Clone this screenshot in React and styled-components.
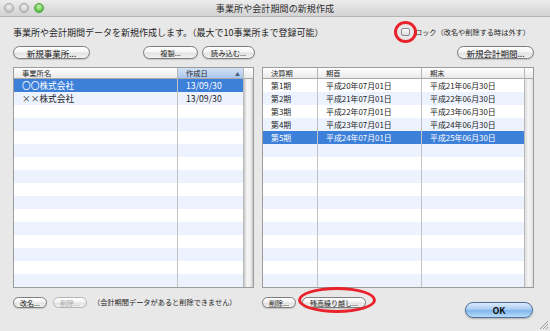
import React from "react";
import styled, { createGlobalStyle, css } from "styled-components";

const GlobalStyle = createGlobalStyle`
  body {
    margin: 0;
    background: #e8e8e8;
    font-family: "Noto Sans CJK JP", "Noto Sans", sans-serif;
  }
`;

const offices = [
  { name: "〇〇株式会社", date: "13/09/30" },
  { name: "××株式会社", date: "13/09/30" },
];

const periods = [
  ["第1期", "平成20年07月01日", "平成21年06月30日"],
  ["第2期", "平成21年07月01日", "平成22年06月30日"],
  ["第3期", "平成22年07月01日", "平成23年06月30日"],
  ["第4期", "平成23年07月01日", "平成24年06月30日"],
  ["第5期", "平成24年07月01日", "平成25年06月30日"],
];

const ROWS = 16;

const App = () => {
  return (
    <Window>
      <GlobalStyle />
      <TitleBar>
        <Lights>
          <Light />
          <Light />
          <Light $green />
        </Lights>
        <Title>事業所や会計期間の新規作成</Title>
      </TitleBar>
      <Body>
        <DescRow>
          <Desc>事業所や会計期間データを新規作成します。（最大で10事業所まで登録可能）</Desc>
          <Lock>
            <CheckWrap>
              <Check />
              <RedCircle />
            </CheckWrap>
            <SmallText>ロック（改名や削除する時は外す）</SmallText>
          </Lock>
        </DescRow>

        <Split $top={8}>
          <Side>
            <Pill $w={77}>新規事業所...</Pill>
            <Group>
              <Pill $small $w={55}>複製...</Pill>
              <Pill $small $w={53}>読み込む...</Pill>
            </Group>
          </Side>
          <Side $end>
            <Pill $w={77}>新規会計期間...</Pill>
          </Side>
        </Split>

        <Split $top={8}>
          <Table>
            <Grid>
              <Row $cols="164px 65px" $header>
                <HeadCell>事業所名</HeadCell>
                <HeadCell $sorted>
                  作成日<SortArrow>▲</SortArrow>
                </HeadCell>
              </Row>
              {Array.from({ length: ROWS }).map((_, i) => {
                const o = offices[i];
                return (
                  <Row key={i} $cols="164px 65px" $odd={i % 2 === 1} $selected={i === 0} $big>
                    <Cell>{o ? o.name : ""}</Cell>
                    <Cell>{o ? o.date : ""}</Cell>
                  </Row>
                );
              })}
            </Grid>
            <Scroll>
              <Corner />
              <Track />
            </Scroll>
          </Table>

          <Table>
            <Grid>
              <Row $cols="55px 104px 102px" $header>
                <HeadCell>決算期</HeadCell>
                <HeadCell>期首</HeadCell>
                <HeadCell>期末</HeadCell>
              </Row>
              {Array.from({ length: ROWS }).map((_, i) => {
                const p = periods[i];
                return (
                  <Row key={i} $cols="55px 104px 102px" $odd={i % 2 === 1} $selected={i === 4}>
                    <Cell>{p ? p[0] : ""}</Cell>
                    <Cell>{p ? p[1] : ""}</Cell>
                    <Cell>{p ? p[2] : ""}</Cell>
                  </Row>
                );
              })}
            </Grid>
            <Scroll $narrow>
              <Corner />
              <Track $light />
            </Scroll>
          </Table>
        </Split>

        <Split $top={9}>
          <Side $gap={6}>
            <Pill $mini $w={34}>改名...</Pill>
            <Pill $mini $disabled $w={34}>削除...</Pill>
            <SmallText>（会計期間データがあると削除できません）</SmallText>
          </Side>
          <Side $gap={6}>
            <Pill $mini $w={34}>削除...</Pill>
            <Marked>
              <Pill $mini $w={64}>残高繰り越し...</Pill>
              <RedEllipse />
            </Marked>
            <OkButton>OK</OkButton>
          </Side>
        </Split>
      </Body>
      <Grip width="9" height="9" viewBox="0 0 9 9">
        <path d="M1 9 L9 1 M4 9 L9 4 M7 9 L9 7" stroke="#9a9a9a" strokeWidth="1" />
      </Grip>
    </Window>
  );
};

export default App;

const Window = styled.div`
  position: relative;
  width: 550px;
  height: 331px;
  background: #e8e8e8;
  display: flex;
  flex-direction: column;
  overflow: hidden;
`;

const TitleBar = styled.div`
  height: 16px;
  display: flex;
  align-items: center;
  justify-content: center;
  position: relative;
  background: linear-gradient(to bottom, #ececec, #d3d3d3);
  border-bottom: 1px solid #b4b4b4;
`;

const Lights = styled.div`
  position: absolute;
  left: 4px;
  top: 3px;
  display: flex;
  gap: 5px;
`;

const Light = styled.span`
  width: 10px;
  height: 10px;
  border-radius: 50%;
  box-sizing: border-box;
  border: 1px solid #a4a4a4;
  background: radial-gradient(circle at 50% 35%, #f2f2f2, #c6c6c6 70%);
  ${(p) =>
    p.$green &&
    css`
      border-color: #4b9a3a;
      background: radial-gradient(circle at 50% 35%, #c8f5b0, #5cc249 70%);
    `}
`;

const Title = styled.div`
  font-size: 9px;
  color: #2e2e2e;
  letter-spacing: 0.1px;
`;

const Body = styled.div`
  padding: 0 16px 0 13px;
  display: flex;
  flex-direction: column;
`;

const DescRow = styled.div`
  margin-top: 9px;
  height: 12px;
  display: flex;
  align-items: center;
  justify-content: space-between;
`;

const Desc = styled.div`
  font-size: 9px;
  color: #1e1e1e;
  white-space: nowrap;
`;

const Lock = styled.div`
  display: flex;
  align-items: center;
  gap: 5px;
  margin-right: 4px;
`;

const CheckWrap = styled.span`
  position: relative;
  display: inline-block;
  width: 9px;
  height: 8px;
`;

const Check = styled.span`
  display: block;
  width: 9px;
  height: 8px;
  box-sizing: border-box;
  border: 1px solid #8a8a8a;
  border-radius: 2px;
  background: linear-gradient(to bottom, #ffffff, #dedede);
`;

const RedCircle = styled.span`
  position: absolute;
  left: -7px;
  top: -7px;
  width: 23px;
  height: 22px;
  box-sizing: border-box;
  border: 3px solid #e8232b;
  border-radius: 50%;
`;

const SmallText = styled.span`
  font-size: 7.2px;
  color: #1e1e1e;
  white-space: nowrap;
`;

const Split = styled.div`
  margin-top: ${(p) => p.$top}px;
  display: grid;
  grid-template-columns: 241px 272px;
  column-gap: 8px;
`;

const Side = styled.div`
  display: flex;
  align-items: flex-start;
  justify-content: ${(p) => (p.$end ? "flex-end" : "space-between")};
  ${(p) =>
    p.$gap &&
    css`
      justify-content: flex-start;
      gap: ${p.$gap}px;
    `}
`;

const Group = styled.div`
  display: flex;
  gap: 4px;
  margin-right: -1px;
`;

const Pill = styled.div`
  box-sizing: border-box;
  width: ${(p) => p.$w}px;
  height: 13px;
  display: flex;
  align-items: center;
  justify-content: center;
  font-size: ${(p) => (p.$small ? 7.3 : 8.5)}px;
  color: #1a1a1a;
  white-space: nowrap;
  border: 1px solid #7d7d7d;
  border-radius: 7px;
  background: linear-gradient(to bottom, #ffffff 0%, #f4f4f4 45%, #e2e2e2 55%, #f2f2f2 100%);
  box-shadow: 0 1px 1px rgba(0, 0, 0, 0.15);
  ${(p) =>
    p.$mini &&
    css`
      height: 11px;
      font-size: 7px;
      border-radius: 6px;
    `}
  ${(p) =>
    p.$disabled &&
    css`
      color: #a8a8a8;
      border-color: #b4b4b4;
      box-shadow: none;
    `}
`;

const Marked = styled.div`
  position: relative;
`;

const RedEllipse = styled.span`
  position: absolute;
  left: -4px;
  top: -10px;
  width: 78px;
  height: 26px;
  box-sizing: border-box;
  border: 3px solid #e8232b;
  border-radius: 50%;
`;

const OkButton = styled.div`
  margin-left: auto;
  margin-top: 5px;
  margin-right: 1px;
  width: 68px;
  height: 16px;
  box-sizing: border-box;
  display: flex;
  align-items: center;
  justify-content: center;
  font-size: 9px;
  font-weight: bold;
  color: #111;
  border: 1px solid #4f6f9a;
  border-radius: 8px;
  background: linear-gradient(to bottom, #dbeafb 0%, #a9cdf3 45%, #7fb5ec 55%, #b9dcfa 100%);
  box-shadow: 0 1px 2px rgba(0, 0, 0, 0.25);
`;

const Table = styled.div`
  height: 221px;
  box-sizing: border-box;
  border: 1px solid #9c9c9c;
  background: #ffffff;
  display: flex;
  overflow: hidden;
`;

const Grid = styled.div`
  flex: 1;
  display: flex;
  flex-direction: column;
`;

const Row = styled.div`
  display: grid;
  grid-template-columns: ${(p) => p.$cols};
  height: 13px;
  font-size: ${(p) => (p.$big ? 8.7 : 7.9)}px;
  color: #1c1c1c;
  background: ${(p) => (p.$odd ? "#edf3fe" : "#ffffff")};
  ${(p) =>
    p.$selected &&
    css`
      background: #3d80d9;
      color: #ffffff;
    `}
  ${(p) =>
    p.$header &&
    css`
      height: 10px;
      font-size: 7.3px;
      color: #2a2a2a;
      border-bottom: 1px solid #a8a8a8;
      background: linear-gradient(to bottom, #ffffff, #e9e9e9);
    `}
`;

const Cell = styled.div`
  box-sizing: border-box;
  padding-left: 8px;
  display: flex;
  align-items: center;
  white-space: nowrap;
  border-right: 1px solid #c2c2c2;
  &:last-child {
    border-right: none;
  }
`;

const HeadCell = styled(Cell)`
  justify-content: space-between;
  border-right-color: #b8b8b8;
  ${(p) =>
    p.$sorted &&
    css`
      background: linear-gradient(to bottom, #d3e3f6, #a8c6eb);
    `}
`;

const SortArrow = styled.span`
  font-size: 5px;
  color: #4a5f80;
  margin-right: 3px;
`;

const Scroll = styled.div`
  width: ${(p) => (p.$narrow ? 9 : 10)}px;
  display: flex;
  flex-direction: column;
  border-left: 1px solid #b8b8b8;
`;

const Corner = styled.div`
  height: 10px;
  border-bottom: 1px solid #a8a8a8;
  background: linear-gradient(to bottom, #ffffff, #e9e9e9);
`;

const Track = styled.div`
  flex: 1;
  background: ${(p) =>
    p.$light
      ? "linear-gradient(to right, #dcdcdc, #f4f4f4 40%, #ececec 80%, #d8d8d8)"
      : "linear-gradient(to right, #c9c9c9, #f7f7f7 35%, #ededed 75%, #c4c4c4)"};
`;

const Grip = styled.svg`
  position: absolute;
  right: 2px;
  bottom: 2px;
`;
